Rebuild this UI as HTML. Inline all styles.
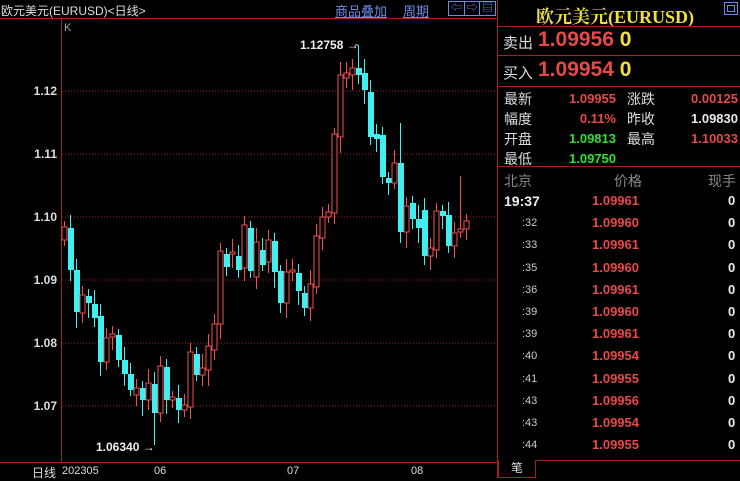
<!DOCTYPE html>
<html><head><meta charset="utf-8"><style>
*{margin:0;padding:0;box-sizing:border-box}
body{width:740px;height:478px;background:#000;overflow:hidden;position:relative;font-family:"Liberation Sans","Noto Sans CJK SC",sans-serif;color:#c8c8c8}
.a{position:absolute;white-space:nowrap}
.r{color:#e84848}.g{color:#2ee02e}.y{color:#f0e040}.w{color:#e8e8e8}.gr{color:#888}
</style></head><body>
<div class="a" style="left:1px;top:2px;font-size:12px;color:#ddd">欧元美元(EURUSD)&lt;日线&gt;</div>
<div class="a" style="left:335px;top:1px;font-size:13px;color:#6a8ee8;text-decoration:underline">商品叠加</div>
<div class="a" style="left:403px;top:1px;font-size:13px;color:#6a8ee8;text-decoration:underline">周期</div>
<div class="a" style="left:448px;top:1px;width:48px;height:15px;border:1px solid #6a8ee8;font-size:11px;color:#6a8ee8;line-height:13px;display:flex"><span style="flex:1;border-right:1px solid #6a8ee8;text-align:center">⇦</span><span style="flex:1;border-right:1px solid #6a8ee8;text-align:center">⇨</span><span style="flex:1;text-align:center">▤</span></div>
<div class="a" style="left:0;top:18px;width:497px;height:1px;background:#a02020"></div>
<div class="a" style="left:61px;top:18px;width:1px;height:445px;background:#a02020"></div>
<div class="a" style="left:0;top:462px;width:497px;height:1px;background:#a02020"></div>
<div class="a" style="left:64px;top:22px;font-size:11px;color:#aaa">K</div>
<svg class="a" style="left:0;top:0" width="497" height="478" id="ch"></svg>
<div class="a" style="left:32px;top:464px;font-size:12px;color:#ddd">日线</div>
<div class="a" style="left:62px;top:465px;font-size:11px;color:#ddd">202305</div>
<div class="a" style="left:154px;top:465px;font-size:11px;color:#ddd">06</div>
<div class="a" style="left:287px;top:465px;font-size:11px;color:#ddd">07</div>
<div class="a" style="left:411px;top:465px;font-size:11px;color:#ddd">08</div>
<!-- right panel -->
<div class="a" style="left:497px;top:0;width:1px;height:478px;background:#a02020"></div>
<div class="a" style="left:536px;top:3px;font-size:18px;font-weight:bold;color:#f0e040;font-family:'Liberation Serif','Noto Serif CJK SC',serif">欧元美元(EURUSD)</div>
<div class="a" style="left:724px;top:2px;width:14px;height:13px;border:1px solid #6a8ee8"><div style="margin:2px;border:1px solid #6a8ee8;height:7px"></div></div>
<div class="a" style="left:498px;top:26px;width:242px;height:1px;background:#a02020"></div>
<div class="a" style="left:503px;top:32px;font-size:15px;color:#ddd">卖出</div>
<div class="a r" style="left:538px;top:28px;font-size:21px;font-weight:bold">1.09956 <span class="y">0</span></div>
<div class="a" style="left:498px;top:55px;width:242px;height:1px;background:#a02020"></div>
<div class="a" style="left:503px;top:62px;font-size:15px;color:#ddd">买入</div>
<div class="a r" style="left:538px;top:58px;font-size:21px;font-weight:bold">1.09954 <span class="y">0</span></div>
<div class="a" style="left:498px;top:86px;width:242px;height:1px;background:#a02020"></div>
<div class="a" style="left:504px;top:89px;font-size:14px;line-height:20px;color:#ddd">最新<br>幅度<br>开盘<br>最低</div>
<div class="a" style="left:556px;top:89px;width:60px;text-align:right;font-size:13px;line-height:20px;font-weight:bold"><span class="r">1.09955</span><br><span class="r">0.11%</span><br><span class="g">1.09813</span><br><span class="g">1.09750</span></div>
<div class="a" style="left:627px;top:89px;font-size:14px;line-height:20px;color:#ddd">涨跌<br>昨收<br>最高</div>
<div class="a" style="left:670px;top:89px;width:68px;text-align:right;font-size:13px;line-height:20px;font-weight:bold"><span class="r">0.00125</span><br><span class="w">1.09830</span><br><span class="r">1.10033</span></div>
<div class="a" style="left:498px;top:166px;width:242px;height:1px;background:#a02020"></div>
<div class="a gr" style="left:504px;top:171px;font-size:14px">北京</div>
<div class="a gr" style="left:614px;top:171px;font-size:14px">价格</div>
<div class="a gr" style="left:708px;top:171px;font-size:14px">现手</div>
<div id="rows"></div>
<div class="a" style="left:498px;top:460px;width:242px;height:1px;background:#a02020"></div>
<div class="a" style="left:498px;top:460px;width:38px;height:18px;border:1px solid #a02020;border-top:none;background:#000;font-size:12px;color:#ddd;text-align:center;line-height:16px">笔</div>
<script>
var rows=[["19:37","1.09961"],[":32","1.09960"],[":33","1.09961"],[":35","1.09960"],[":36","1.09961"],[":39","1.09960"],[":39","1.09961"],[":40","1.09954"],[":41","1.09955"],[":43","1.09956"],[":43","1.09954"],[":44","1.09955"]];
var h="";rows.forEach(function(r,i){var t=193+i*22.2;
h+='<div class="a" style="'+(i==0?'left:504px;font-size:14px;font-weight:bold;color:#eee;':'left:522px;font-size:11px;color:#ccc;top:'+(t+2)+'px;')+(i==0?'top:'+t+'px':'')+'">'+r[0]+'</div>';
h+='<div class="a r" style="left:592px;top:'+t+'px;font-size:13px;font-weight:bold">'+r[1]+'</div>';
h+='<div class="a" style="left:728px;top:'+t+'px;font-size:13px;font-weight:bold;color:#eee">0</div>';});
document.getElementById("rows").innerHTML=h;
var s='';
[[91,"1.12"],[154,"1.11"],[217,"1.10"],[280,"1.09"],[343,"1.08"],[406,"1.07"]].forEach(function(g){
s+='<line x1="62" x2="497" y1="'+g[0]+'" y2="'+g[0]+'" stroke="#a02020" stroke-dasharray="1,2"/>';
s+='<text x="57" y="'+(g[0]+4)+'" fill="#ddd" font-size="12" font-weight="bold" text-anchor="end" font-family="Liberation Sans">'+g[1]+'</text>';});
var c=[[64,1,227,240],[70,0,228,270],[76,0,270,312],[82,1,295,313],[88,0,296,303],[94,0,304,318],[100,0,316,362],[106,1,338,362],[112,1,334,337],[118,0,335,360],[124,0,360,374],[130,0,374,390],[136,1,388,395],[142,0,388,400],[148,1,383,400],[154,0,384,413],[160,1,366,413],[166,0,367,400],[172,1,397,400],[178,0,398,410],[184,1,405,410],[190,1,352,407],[196,0,354,375],[202,1,368,375],[208,1,346,370],[214,1,324,350],[220,1,251,324],[226,0,254,267],[232,1,252,254],[238,0,256,270],[244,1,225,268],[250,0,228,271],[256,1,242,277],[262,0,250,265],[268,1,240,262],[274,0,241,272],[280,0,271,303],[286,1,272,303],[292,1,270,272],[298,0,273,291],[304,0,293,308],[310,1,284,308],[316,1,236,287],[322,1,217,238],[328,1,212,217],[334,1,134,213],[340,1,75,137],[346,1,73,78],[352,1,68,75],[358,0,68,75],[364,0,73,90],[370,0,92,137],[376,0,134,139],[382,0,135,177],[388,0,178,183],[394,1,163,183],[400,0,163,232],[406,1,206,232],[412,0,203,219],[418,0,219,228],[424,0,210,256],[430,1,248,256],[436,1,211,250],[442,0,211,216],[448,0,215,246],[454,1,233,246],[460,1,229,232],[466,1,221,229]];
c.forEach(function(k,i){var hi=k[2]-6-(i*7%9),lo=k[3]+6+(i*5%11);
if(k[0]==358)hi=45;if(k[0]==154)lo=445;if(k[0]==460)hi=176;if(k[0]==400)hi=123;
var col=k[1]?"#f05050":"#40f0f0";
s+='<line x1="'+(k[0]+0.5)+'" x2="'+(k[0]+0.5)+'" y1="'+hi+'" y2="'+lo+'" stroke="'+col+'"/>';
if(k[1])s+='<rect x="'+(k[0]-2)+'" y="'+k[2]+'" width="5" height="'+Math.max(1,k[3]-k[2])+'" fill="#000" stroke="'+col+'"/>';
else s+='<rect x="'+(k[0]-2)+'" y="'+k[2]+'" width="6" height="'+Math.max(2,k[3]-k[2])+'" fill="'+col+'"/>';});
s+='<text x="300" y="49" fill="#eee" font-size="12" font-weight="bold" font-family="Liberation Sans">1.12758 →</text><line x1="355" x2="358" y1="45" y2="45" stroke="#ddd"/>';
s+='<text x="96" y="451" fill="#eee" font-size="12" font-weight="bold" font-family="Liberation Sans">1.06340 →</text>';
document.getElementById("ch").innerHTML=s;
</script>
</body></html>
